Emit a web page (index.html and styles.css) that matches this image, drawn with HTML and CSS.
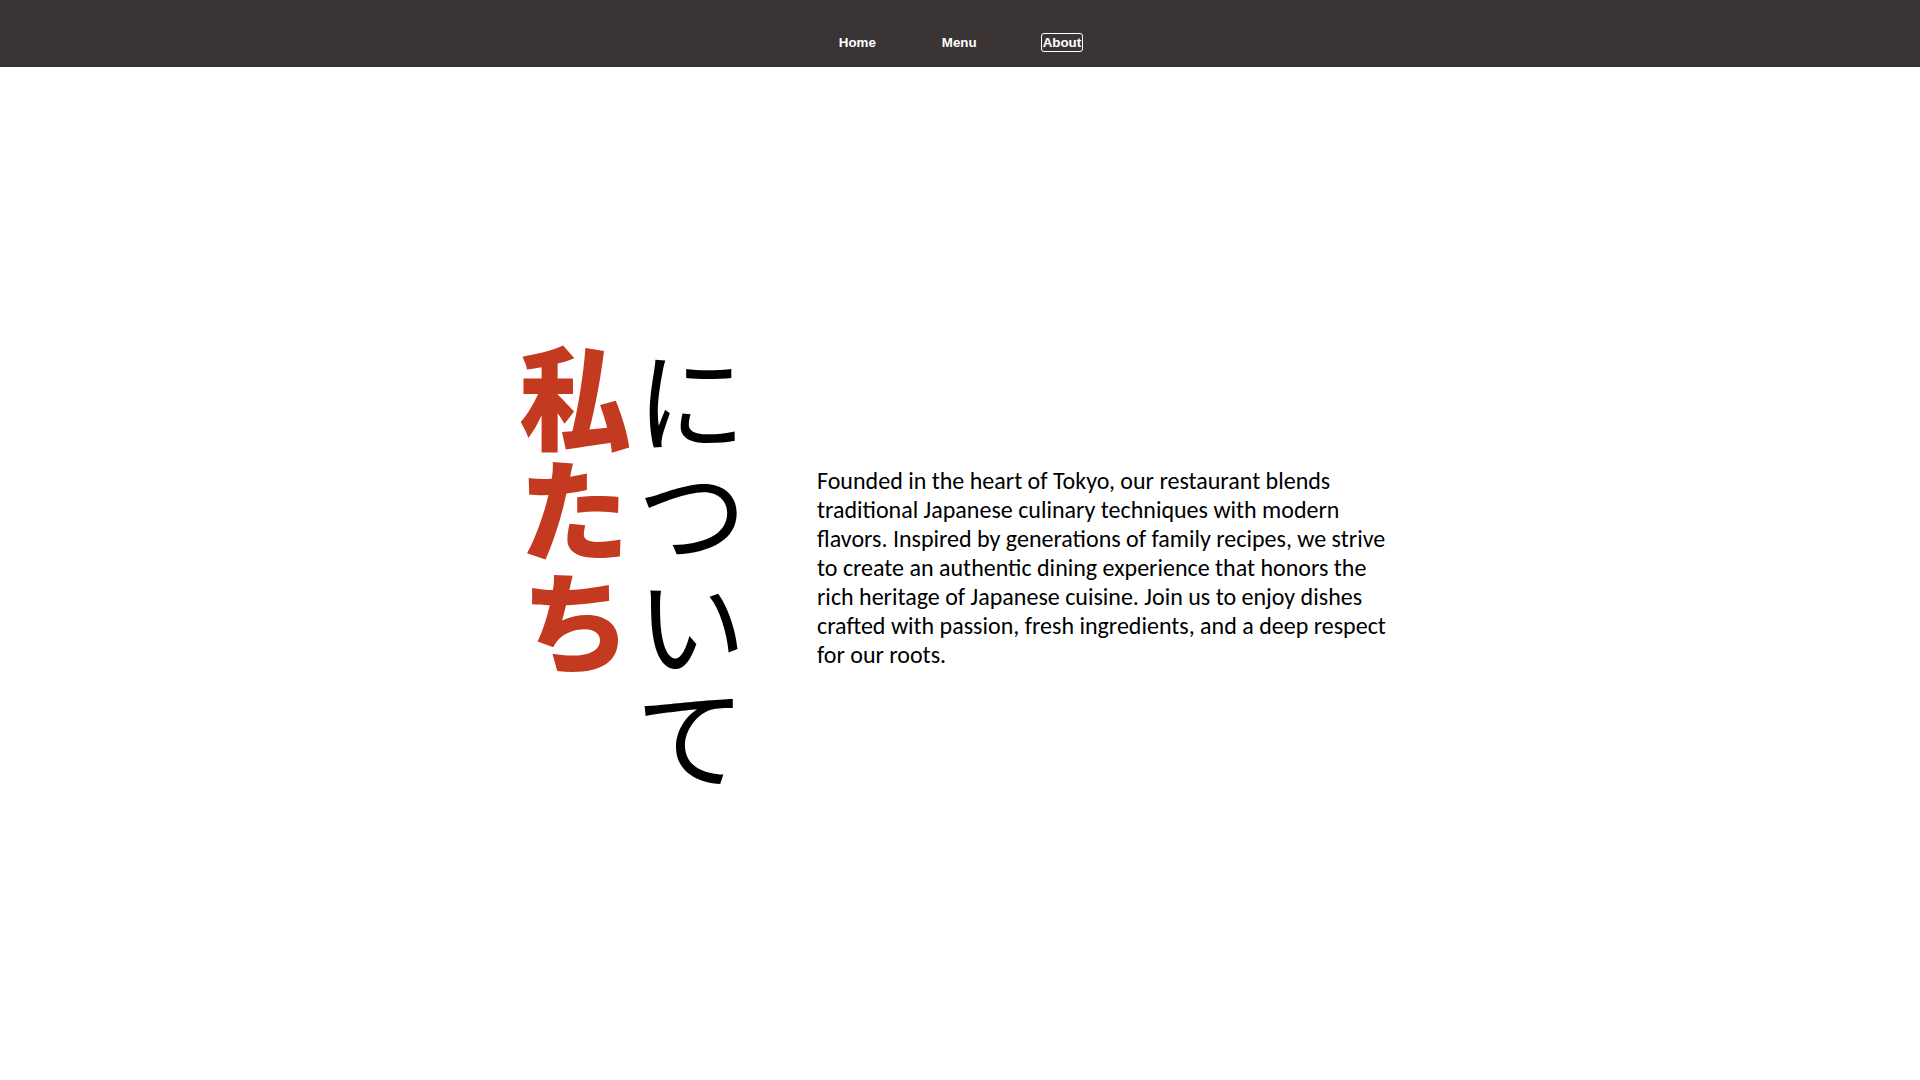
FILE: index.html
```html
<!DOCTYPE html>
<html lang="ja">
<head>
<meta charset="utf-8">
<title>About</title>
<link rel="stylesheet" href="styles.css">
</head>
<body>
<nav class="topnav">
  <a class="nav-link" href="#">Home</a>
  <a class="nav-link" href="#">Menu</a>
  <a class="nav-link nav-link--active" href="#">About</a>
</nav>
<main class="about">
  <h1 class="about-title">
    <span class="about-title__red">私たち</span>
    <span class="about-title__black">について</span>
  </h1>
  <p class="about-text">Founded in the heart of Tokyo, our restaurant blends traditional Japanese culinary techniques with modern flavors. Inspired by generations of family recipes, we strive to create an authentic dining experience that honors the rich heritage of Japanese cuisine. Join us to enjoy dishes crafted with passion, fresh ingredients, and a deep respect for our roots.</p>
</main>
</body>
</html>
```
FILE: styles.css
```css
* { box-sizing: border-box; }
html, body { margin: 0; padding: 0; }
body {
  background: #ffffff;
  font-family: "Liberation Sans", Arial, sans-serif;
}
.topnav {
  height: 67px;
  background: #3a3534;
  display: flex;
  justify-content: center;
  align-items: center;
  gap: 62px;
  padding-top: 18px;
}
.nav-link {
  color: #ffffff;
  text-decoration: none;
  font-weight: bold;
  font-size: 13.33px;
  line-height: 16px;
  padding: 0.5px 1px;
  border: 1.5px solid transparent;
  border-radius: 3px;
}
.nav-link--active {
  border-color: #ffffff;
}
.about {
  height: 1000px;
  display: flex;
  align-items: center;
  padding-left: 519px;
}
.about-title {
  margin: 0 0 -6px 0;
  display: flex;
  align-items: flex-start;
  font-family: "Noto Sans CJK JP", sans-serif;
  font-size: 112px;
  line-height: 1;
  font-weight: normal;
  gap: 4px;
}
.about-title__red,
.about-title__black {
  writing-mode: vertical-rl;
  display: block;
}
.about-title__red {
  color: #c43a20;
  font-weight: 900;
  margin-top: -3px;
}
.about-title__black {
  color: #000000;
  font-weight: 400;
}
.about-text {
  margin: 0 0 0 70px;
  width: 575px;
  font-family: Carlito, Calibri, Lato, sans-serif;
  font-size: 24px;
  line-height: 29px;
  color: #000000;
}
```
